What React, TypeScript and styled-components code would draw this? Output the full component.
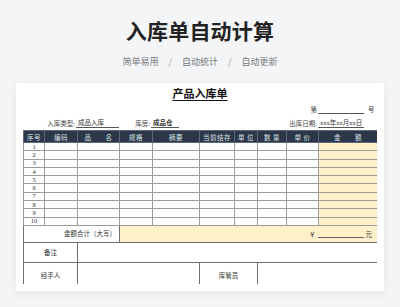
import styled, { createGlobalStyle } from "styled-components";

// Page-wide reset and background
const GlobalStyle = createGlobalStyle`
  html, body {
    margin: 0;
    padding: 0;
    background: #f4f5f7;
  }
  body {
    font-family: "Noto Sans CJK SC", "Noto Sans", sans-serif;
  }
`;

const Page = styled.main`
  width: 400px;
  height: 307px;
  overflow: hidden;
  display: flex;
  flex-direction: column;
  align-items: center;
`;

const Title = styled.h1`
  margin: 16px 0 0;
  font-size: 21px;
  line-height: 28px;
  font-weight: 700;
  color: #222;
  letter-spacing: 0.2px;
`;

const Tagline = styled.div`
  margin-top: 11px;
  display: flex;
  gap: 9px;
  font-size: 9px;
  line-height: 13px;
  color: #777;
`;

const Slash = styled.span`
  color: #999;
  padding: 0 1px;
`;

// White paper card that holds the spreadsheet preview
const Card = styled.section`
  margin-top: 15px;
  width: 368px;
  height: 208px;
  box-sizing: border-box;
  padding: 5px 7px 7px;
  background: #fff;
  box-shadow: 0 2px 10px rgba(0, 0, 0, 0.07);
`;

const Sheet = styled.div`
  height: 196px;
  overflow: hidden;
  font-family: "Liberation Serif", "Noto Sans CJK SC", serif;
  color: #333;
`;

const DocTitle = styled.div`
  text-align: center;
  font-size: 11px;
  line-height: 13px;
  font-weight: 700;
  color: #111;
  span {
    text-decoration: underline;
    text-underline-offset: 2px;
  }
`;

const Line = styled.div<{ $cols: string; $mt: number }>`
  display: grid;
  grid-template-columns: ${(p) => p.$cols};
  align-items: end;
  margin-top: ${(p) => p.$mt}px;
  font-size: 6.5px;
  line-height: 9px;
`;

const Label = styled.div`
  text-align: right;
  padding-right: 1px;
  color: #444;
`;

const Value = styled.div<{ $bold?: boolean }>`
  border-bottom: 1px solid #555;
  padding-left: 2px;
  font-weight: ${(p) => (p.$bold ? 700 : 400)};
  color: #333;
  height: 9px;
`;

const Suffix = styled.div`
  padding-left: 4px;
  color: #444;
`;

const Table = styled.table`
  margin-top: 2px;
  width: 354px;
  table-layout: fixed;
  border-collapse: collapse;
  border-left: 1.5px solid #222;
  border-right: 1.5px solid #222;
  font-size: 6.5px;
`;

const Head = styled.th`
  height: 11px;
  padding: 0;
  background: #2c3849;
  color: #dfe4ea;
  font-weight: 400;
  border: 1px solid #5d6878;
  letter-spacing: 0.5px;
`;

const Cell = styled.td<{ $fill?: boolean; $h?: number; $align?: string }>`
  height: ${(p) => p.$h ?? 7}px;
  padding: 0 3px;
  border: 1.5px solid #9a9a9a;
  background: ${(p) => (p.$fill ? "#fff1c9" : "#fff")};
  text-align: ${(p) => p.$align ?? "center"};
  color: #333;
  line-height: 6px;
  overflow: hidden;
  white-space: nowrap;
`;

const Strong = styled(Cell)`
  border-color: #6e6e6e;
`;

const Money = styled.span`
  display: inline-flex;
  align-items: flex-end;
  gap: 2px;
  margin-right: 2px;
  i {
    font-style: normal;
  }
  b {
    display: inline-block;
    width: 46px;
    border-bottom: 1px solid #666;
    height: 6px;
  }
`;

const widths = [21, 33, 42, 33, 47, 35, 23, 29, 32, 59];
const heads = ["序号", "编码", "品　　名", "规格", "摘要", "当前结存", "单 位", "数 量", "单 价", "金　　额"];

export default function App() {
  const rows = Array.from({ length: 10 }, (_, i) => i + 1);
  return (
    <Page>
      <GlobalStyle />
      <Title>入库单自动计算</Title>
      <Tagline>
        <span>简单易用</span>
        <Slash>/</Slash>
        <span>自动统计</span>
        <Slash>/</Slash>
        <span>自动更新</span>
      </Tagline>

      <Card>
        <Sheet>
          <DocTitle>
            <span>产品入库单</span>
          </DocTitle>
          <Line $cols="1fr 46px 13px" $mt={3}>
            <Label>第</Label>
            <Value />
            <Suffix>号</Suffix>
          </Line>
          <Line $cols="53px 43px 32px 28px 1fr 46px 13px" $mt={4}>
            <Label>入库类型:</Label>
            <Value>成品入库</Value>
            <Label>库房:</Label>
            <Value $bold>成品仓</Value>
            <Label>出库日期:</Label>
            <Value>xxx年xx月xx日</Value>
            <div />
          </Line>

          <Table>
            <colgroup>
              {widths.map((w, i) => (
                <col key={i} style={{ width: w }} />
              ))}
            </colgroup>
            <thead>
              <tr>
                {heads.map((h) => (
                  <Head key={h}>{h}</Head>
                ))}
              </tr>
            </thead>
            <tbody>
              {rows.map((n) => (
                <tr key={n}>
                  <Cell $h={7.3}>{n}</Cell>
                  {widths.slice(1, 9).map((_, i) => (
                    <Cell key={i} $h={7.3} />
                  ))}
                  <Cell $h={7.3} $fill />
                </tr>
              ))}
              <tr>
                <Strong colSpan={3} $h={16.5} $align="right">
                  金额合计（大写）
                </Strong>
                <Strong colSpan={7} $h={16.5} $align="right" $fill>
                  <Money>
                    <i>￥</i>
                    <b />
                    <i>元</i>
                  </Money>
                </Strong>
              </tr>
              <tr>
                <Strong colSpan={2} $h={18.5}>
                  备注
                </Strong>
                <Strong colSpan={8} $h={18.5} />
              </tr>
              <tr>
                <Strong colSpan={2} $h={26}>
                  经手人
                </Strong>
                <Strong colSpan={3} $h={26} />
                <Strong colSpan={2} $h={26}>
                  库管员
                </Strong>
                <Strong colSpan={3} $h={26} />
              </tr>
            </tbody>
          </Table>
        </Sheet>
      </Card>
    </Page>
  );
}
